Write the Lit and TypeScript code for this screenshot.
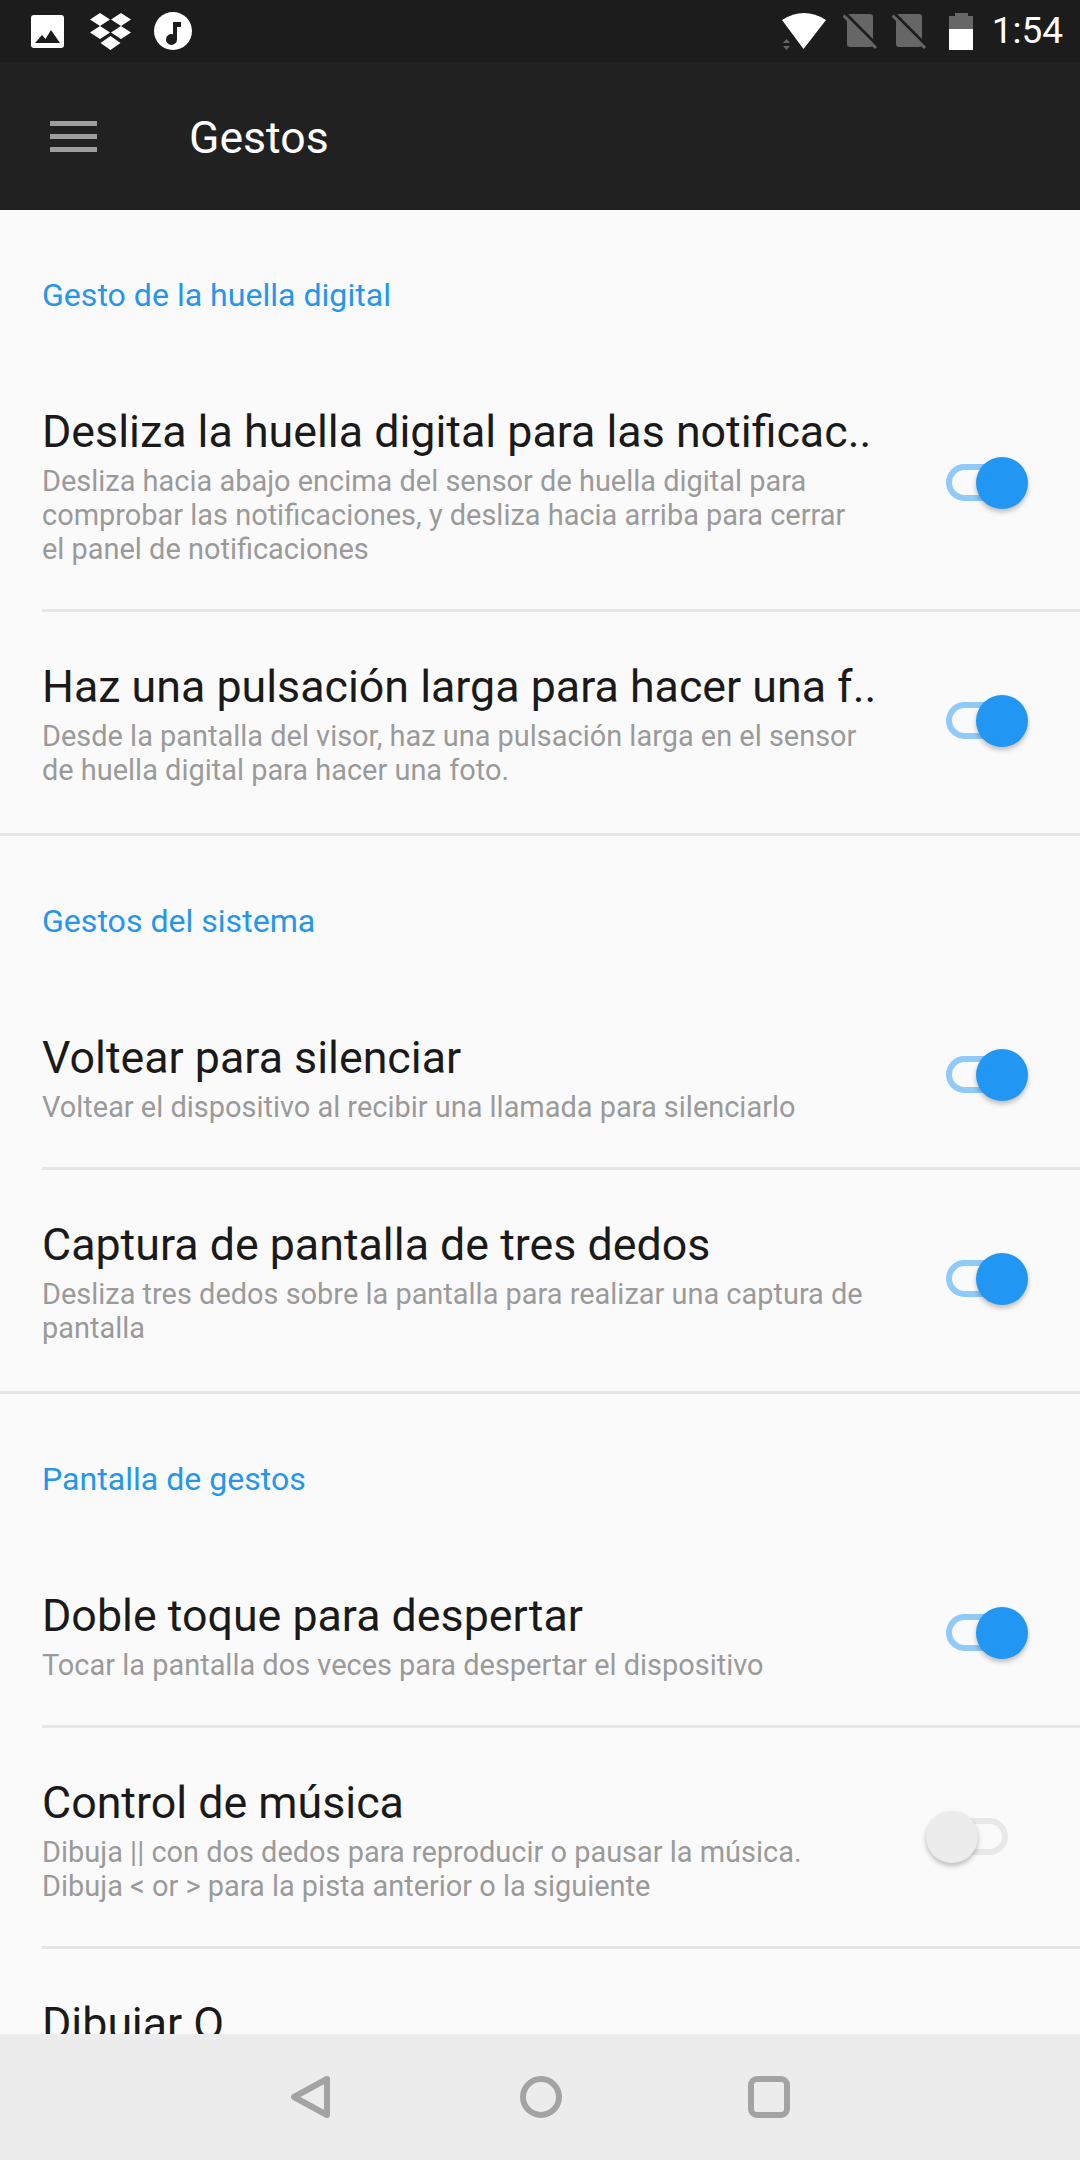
import { LitElement, html, css, svg } from "lit";
import { customElement } from "lit/decorators.js";

interface Item {
  title: string;
  sub: string[];
  on: boolean;
}

interface Section {
  header: string;
  items: Item[];
}

const sections: Section[] = [
  {
    header: "Gesto de la huella digital",
    items: [
      {
        title: "Desliza la huella digital para las notificac..",
        sub: [
          "Desliza hacia abajo encima del sensor de huella digital para",
          "comprobar las notificaciones, y desliza hacia arriba para cerrar",
          "el panel de notificaciones",
        ],
        on: true,
      },
      {
        title: "Haz una pulsación larga para hacer una f..",
        sub: [
          "Desde la pantalla del visor, haz una pulsación larga en el sensor",
          "de huella digital para hacer una foto.",
        ],
        on: true,
      },
    ],
  },
  {
    header: "Gestos del sistema",
    items: [
      {
        title: "Voltear para silenciar",
        sub: ["Voltear el dispositivo al recibir una llamada para silenciarlo"],
        on: true,
      },
      {
        title: "Captura de pantalla de tres dedos",
        sub: [
          "Desliza tres dedos sobre la pantalla para realizar una captura de",
          "pantalla",
        ],
        on: true,
      },
    ],
  },
  {
    header: "Pantalla de gestos",
    items: [
      {
        title: "Doble toque para despertar",
        sub: ["Tocar la pantalla dos veces para despertar el dispositivo"],
        on: true,
      },
      {
        title: "Control de música",
        sub: [
          "Dibuja || con dos dedos para reproducir o pausar la música.",
          "Dibuja < or > para la pista anterior o la siguiente",
        ],
        on: false,
      },
      { title: "Dibujar O", sub: [], on: false },
    ],
  },
];

const simOff = svg`
  <rect x="4" y="1" width="26" height="33" rx="3" fill="#666" />
  <path d="M2.500 0.500L35.500 33.500" stroke="#1c1c1c" stroke-width="3" />
  <path d="M0.500 2.500L33 35" stroke="#666" stroke-width="3" />
`;

@customElement("app-root")
export class AppRoot extends LitElement {
  static styles = css`
    :host {
      display: flex;
      flex-direction: column;
      width: 1080px;
      height: 2160px;
      overflow: hidden;
      background: #fafafa;
      font-family: Roboto, sans-serif;
    }

    .status {
      display: flex;
      align-items: center;
      flex: none;
      height: 62px;
      padding: 0 17px 0 31px;
      background: #1c1c1c;
      box-sizing: border-box;
    }
    .status svg {
      display: block;
      flex: none;
    }
    .status .dropbox {
      margin-left: 25px;
    }
    .status .music {
      margin-left: 22px;
    }
    .status .wifi {
      margin-left: auto;
    }
    .status .sim1 {
      margin-left: 16px;
    }
    .status .sim2 {
      margin-left: 14px;
    }
    .status .battery {
      margin-left: 22px;
    }
    .time {
      margin-left: 19px;
      color: #fff;
      font-size: 37px;
      line-height: 62px;
    }

    .toolbar {
      display: flex;
      align-items: center;
      flex: none;
      height: 148px;
      padding-left: 50px;
      background: #212121;
      box-sizing: border-box;
    }
    .menu {
      display: flex;
      flex-direction: column;
      gap: 8px;
      width: 47px;
    }
    .menu span {
      height: 5px;
      background: #9e9e9e;
    }
    .toolbar h1 {
      margin: 3px 0 0 92px;
      color: #fff;
      font-size: 44.625px;
      font-weight: 400;
    }

    .content {
      flex: 1;
      min-height: 0;
      overflow: hidden;
    }
    .section {
      border-bottom: 3px solid #e6e6e6;
    }
    .section:last-child {
      border-bottom: none;
    }
    .header {
      padding: 65px 42px 42px;
      color: #2596ec;
      font-size: 32.1px;
      line-height: 40px;
    }
    .row {
      display: flex;
      align-items: center;
      margin-left: 42px;
      padding: 47px 0 43px;
      border-bottom: 3px solid #e6e6e6;
    }
    .section:not(:last-child) .row:last-child {
      padding-bottom: 46px;
      border-bottom: none;
    }
    .text {
      flex: none;
      width: 835px;
    }
    .title {
      color: #1a1a1a;
      font-size: 44.75px;
      line-height: 56px;
      white-space: nowrap;
    }
    .sub {
      margin-top: 4px;
      color: #9a9a9a;
      font-size: 28.95px;
      line-height: 34px;
      white-space: nowrap;
    }

    .switch {
      position: relative;
      flex: none;
      width: 62px;
      height: 37px;
      margin: 0 0 5px 69px;
      box-sizing: border-box;
      border: 6px solid #e8e8e8;
      border-radius: 19px;
    }
    .switch.on {
      border-color: #90caf9;
    }
    .knob {
      position: absolute;
      top: 50%;
      left: -26px;
      width: 52px;
      height: 52px;
      margin-top: -26px;
      border-radius: 50%;
      background: #ececec;
      box-shadow: 0 3px 5px rgba(0, 0, 0, 0.25);
    }
    .switch.on .knob {
      left: 24px;
      background: #2196f3;
    }

    .nav {
      display: flex;
      align-items: center;
      justify-content: center;
      flex: none;
      height: 126px;
      background: #ececec;
    }
    .nav svg {
      display: block;
    }
    .nav .back {
      margin-right: 190px;
    }
    .nav .home {
      margin-right: 186px;
    }
  `;

  private renderStatus() {
    return html`<div class="status">
      <svg width="33" height="33" viewBox="0 0 33 33">
        <rect width="33" height="33" rx="3" fill="#fff" />
        <path d="M4 28l7-8 3.500 4 5.500-9 9 13z" fill="#1c1c1c" />
      </svg>
      <svg class="dropbox" width="43" height="37" viewBox="0 0 43 37" fill="#fff">
        <path d="M11 0l10 6.500-10 6.500L1 6.500zM32 0l10 6.500-10 6.500-10-6.500zM11 13l10 6.500-10 6.500-10-6.500zM32 13l10 6.500-10 6.500-10-6.500zM21.500 23l10 7-10 7-10-7z" />
      </svg>
      <svg class="music" width="38" height="38" viewBox="0 0 38 38">
        <circle cx="19" cy="19" r="19" fill="#fff" />
        <path d="M19 10h8v5h-4v12.500a5.500 5.500 0 1 1-4-5.300z" fill="#1c1c1c" />
      </svg>
      <svg class="wifi" width="46" height="37" viewBox="0 0 46 37">
        <path d="M1 7Q23-7 45 7L22.500 36z" fill="#fff" />
        <path d="M2 30l3.500-4 3.500 4zM2 33h7l-3.500 4z" fill="#666" />
      </svg>
      <svg class="sim1" width="35" height="36" viewBox="0 0 35 36">${simOff}</svg>
      <svg class="sim2" width="35" height="36" viewBox="0 0 35 36">${simOff}</svg>
      <svg class="battery" width="24" height="37" viewBox="0 0 24 37">
        <path d="M6 0h13v3h5v13H0V3h6z" fill="#666" />
        <rect y="16" width="24" height="21" fill="#fff" />
      </svg>
      <span class="time">1:54</span>
    </div>`;
  }

  private renderItem(item: Item) {
    return html`<div class="row">
      <div class="text">
        <div class="title">${item.title}</div>
        ${item.sub.length
          ? html`<div class="sub">${item.sub.map((l) => html`<div>${l}</div>`)}</div>`
          : ""}
      </div>
      ${item.sub.length
        ? html`<div class="switch ${item.on ? "on" : ""}"><div class="knob"></div></div>`
        : ""}
    </div>`;
  }

  render() {
    return html`
      ${this.renderStatus()}
      <div class="toolbar">
        <div class="menu"><span></span><span></span><span></span></div>
        <h1>Gestos</h1>
      </div>
      <div class="content">
        ${sections.map(
          (s) => html`<div class="section">
            <div class="header">${s.header}</div>
            ${s.items.map((i) => this.renderItem(i))}
          </div>`
        )}
      </div>
      <div class="nav">
        <svg class="back" width="39" height="42" viewBox="0 0 39 42">
          <path d="M36 3L3 21 36 39z" fill="none" stroke="#a3a3a3" stroke-width="6" stroke-linejoin="round" />
        </svg>
        <svg class="home" width="42" height="42" viewBox="0 0 42 42">
          <circle cx="21" cy="21" r="18" fill="none" stroke="#a3a3a3" stroke-width="6" />
        </svg>
        <svg width="42" height="42" viewBox="0 0 42 42">
          <rect x="3" y="3" width="36" height="36" rx="6" fill="none" stroke="#a3a3a3" stroke-width="6" />
        </svg>
      </div>
    `;
  }
}
